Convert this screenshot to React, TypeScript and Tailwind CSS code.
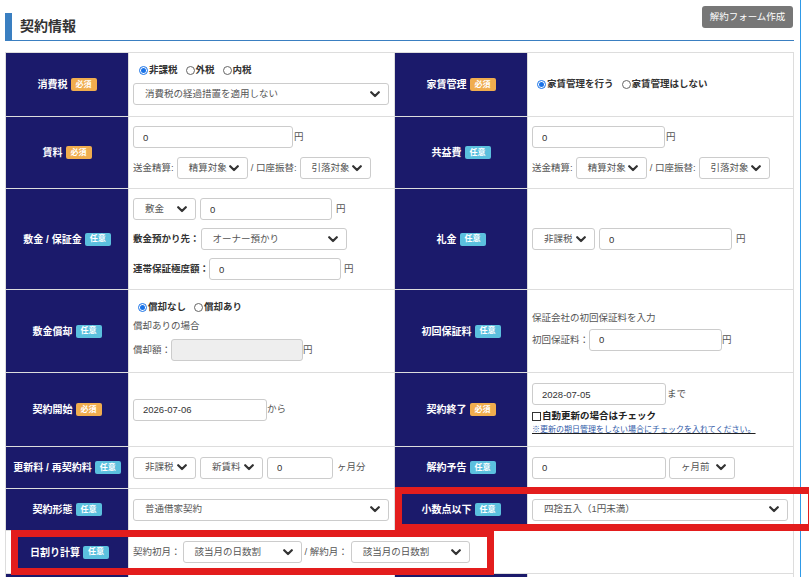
import React from "react";

const NAVY = "bg-[#1b1a6b]";

function Badge({ req }: { req?: boolean }) {
  return req ? (
    <span className="bg-[#f0ad4e] text-white text-[8px] font-bold h-[13px] px-[5px] flex items-center rounded-[2px]">必須</span>
  ) : (
    <span className="bg-[#5bc0de] text-white text-[8px] font-bold h-[13px] px-[5px] flex items-center rounded-[2px]">任意</span>
  );
}

function Label({ text, req }: { text: string; req?: boolean }) {
  return (
    <div className={`${NAVY} flex items-center justify-center gap-[3px] text-white text-[10px] font-bold`}>
      <span>{text}</span>
      <Badge req={req} />
    </div>
  );
}

function Chevron() {
  return (
    <svg width="10" height="7" viewBox="0 0 10 7" className="shrink-0">
      <polyline points="1.2,1.2 5,5 8.8,1.2" fill="none" stroke="#333" strokeWidth="2.2" strokeLinecap="round" strokeLinejoin="round" />
    </svg>
  );
}

function Sel({ text, w }: { text: string; w: string }) {
  return (
    <div className={`${w} h-[22px] shrink-0 border border-[#ccc] rounded-[3px] bg-white flex items-center justify-between pl-[11px] pr-[8px] text-[9.5px] text-[#555]`}>
      <span className="whitespace-nowrap">{text}</span>
      <Chevron />
    </div>
  );
}

function Inp({ v, w, disabled }: { v?: string; w: string; disabled?: boolean }) {
  return (
    <input
      readOnly
      value={v ?? ""}
      className={`${w} h-[22px] shrink-0 border border-[#ccc] rounded-[3px] pl-[9px] text-[9.5px] text-[#333] outline-none ${disabled ? "bg-[#eee]" : "bg-white"}`}
    />
  );
}

function Radio({ checked, label }: { checked?: boolean; label: string }) {
  return (
    <span className="flex items-center gap-[1px] font-bold text-[#333] text-[9.5px] whitespace-nowrap">
      {checked ? (
        <span className="w-[9px] h-[9px] rounded-full border border-[#1a73e8] bg-white flex items-center justify-center">
          <span className="w-[5px] h-[5px] rounded-full bg-[#1a73e8]" />
        </span>
      ) : (
        <span className="w-[9px] h-[9px] rounded-full border border-[#666] bg-white" />
      )}
      {label}
    </span>
  );
}

export default function App() {
  return (
    <div className="relative w-[809px] h-[577px] overflow-hidden bg-white flex font-['Liberation_Sans','Noto_Sans_CJK_JP',sans-serif] text-[9.5px] text-[#555]">
      <div className="w-[800px] pl-[5px] pr-[6px] shrink-0">
        {/* header */}
        <div className="h-[41px] border-b border-[#3a7fc1] flex justify-between">
          <div className="mt-[13px] h-[27px] border-l-[7px] border-[#3a7fc1] pl-[8px] flex items-center text-[14px] font-bold text-[#333]">
            契約情報
          </div>
          <div className="mt-[6px] mr-[1px] h-[22px] w-[91px] bg-[#777] rounded-[3px] text-white text-[9.5px] flex items-center justify-center">
            解約フォーム作成
          </div>
        </div>

        {/* table */}
        <div className="mt-[11px] w-[789px] h-[540px] grid grid-cols-[122px_265px_132px_265px] grid-rows-[63px_71px_100px_82px_73px_41px_41px_42px_1fr] gap-px p-px bg-[#ddd]">
          {/* row 1 */}
          <Label text="消費税" req />
          <div className="bg-white flex flex-col justify-center gap-[7px] pl-[4px]">
            <div className="flex items-center gap-[8px] pl-[6px] h-[12px]">
              <Radio checked label="非課税" />
              <Radio label="外税" />
              <Radio label="内税" />
            </div>
            <Sel text="消費税の経過措置を適用しない" w="w-[256px]" />
          </div>
          <Label text="家賃管理" req />
          <div className="bg-white flex items-center pl-[9px] gap-[8px]">
            <Radio checked label="家賃管理を行う" />
            <Radio label="家賃管理はしない" />
          </div>

          {/* row 2 */}
          <Label text="賃料" req />
          <div className="bg-white flex flex-col justify-center gap-[9px] pl-[4px]">
            <div className="flex items-center">
              <Inp v="0" w="w-[160px]" />
              <span className="ml-[1px]">円</span>
            </div>
            <div className="flex items-center gap-[3px] whitespace-nowrap">
              <span>送金精算:</span>
              <Sel text="精算対象" w="w-[71px]" />
              <span>/ 口座振替:</span>
              <Sel text="引落対象" w="w-[71px]" />
            </div>
          </div>
          <Label text="共益費" />
          <div className="bg-white flex flex-col justify-center gap-[9px] pl-[4px]">
            <div className="flex items-center">
              <Inp v="0" w="w-[133px]" />
              <span className="ml-[1px]">円</span>
            </div>
            <div className="flex items-center gap-[3px] whitespace-nowrap">
              <span>送金精算:</span>
              <Sel text="精算対象" w="w-[71px]" />
              <span>/ 口座振替:</span>
              <Sel text="引落対象" w="w-[71px]" />
            </div>
          </div>

          {/* row 3 */}
          <Label text="敷金 / 保証金" />
          <div className="bg-white flex flex-col justify-center gap-[8px] pl-[4px]">
            <div className="flex items-center gap-[4px]">
              <Sel text="敷金" w="w-[63px]" />
              <Inp v="0" w="w-[132px]" />
              <span>円</span>
            </div>
            <div className="flex items-center gap-[1px]">
              <span className="font-bold text-[#333] whitespace-nowrap">敷金預かり先：</span>
              <Sel text="オーナー預かり" w="w-[146px]" />
            </div>
            <div className="flex items-center">
              <span className="font-bold text-[#333] whitespace-nowrap">連帯保証極度額：</span>
              <Inp v="0" w="w-[132px]" />
              <span className="ml-[3px]">円</span>
            </div>
          </div>
          <Label text="礼金" />
          <div className="bg-white flex items-center gap-[4px] pl-[4px]">
            <Sel text="非課税" w="w-[63px]" />
            <Inp v="0" w="w-[133px]" />
            <span>円</span>
          </div>

          {/* row 4 */}
          <Label text="敷金償却" />
          <div className="bg-white flex flex-col justify-center gap-[7px] pl-[4px]">
            <div className="flex items-center gap-[8px] pl-[5px] h-[12px]">
              <Radio checked label="償却なし" />
              <Radio label="償却あり" />
            </div>
            <div className="h-[12px] flex items-center">償却ありの場合</div>
            <div className="flex items-center">
              <span className="whitespace-nowrap">償却額：</span>
              <Inp disabled w="w-[132px]" />
              <span>円</span>
            </div>
          </div>
          <Label text="初回保証料" />
          <div className="bg-white flex flex-col justify-center gap-[3px] pl-[4px]">
            <div>保証会社の初回保証料を入力</div>
            <div className="flex items-center">
              <span className="whitespace-nowrap">初回保証料：</span>
              <Inp v="0" w="w-[133px]" />
              <span>円</span>
            </div>
          </div>

          {/* row 5 */}
          <Label text="契約開始" req />
          <div className="bg-white flex items-center pl-[4px]">
            <Inp v="2026-07-06" w="w-[134px]" />
            <span>から</span>
          </div>
          <Label text="契約終了" req />
          <div className="bg-white flex flex-col justify-center pl-[4px]">
            <div className="flex items-center">
              <Inp v="2028-07-05" w="w-[134px]" />
              <span className="ml-[1px]">まで</span>
            </div>
            <div className="flex items-center mt-[5px] h-[12px] font-bold text-[#222]">
              <span className="w-[9px] h-[9px] border border-[#333] bg-white mr-[1px]" />
              自動更新の場合はチェック
            </div>
            <div className="mt-[2px] text-[8px] text-[#2f5aa8] underline decoration-[#222] whitespace-nowrap">
              ※更新の期日管理をしない場合にチェックを入れてください。
            </div>
          </div>

          {/* row 6 */}
          <Label text="更新料 / 再契約料" />
          <div className="bg-white flex items-center gap-[4px] pl-[4px]">
            <Sel text="非課税" w="w-[63px]" />
            <Sel text="新賃料" w="w-[63px]" />
            <Inp v="0" w="w-[66px]" />
            <span>ヶ月分</span>
          </div>
          <Label text="解約予告" />
          <div className="bg-white flex items-center gap-[3px] pl-[4px]">
            <Inp v="0" w="w-[134px]" />
            <Sel text="ヶ月前" w="w-[66px]" />
          </div>

          {/* row 7 */}
          <Label text="契約形態" />
          <div className="bg-white flex items-center pl-[4px]">
            <Sel text="普通借家契約" w="w-[256px]" />
          </div>
          <Label text="小数点以下" />
          <div className="bg-white flex items-center pl-[4px]">
            <Sel text="四捨五入（1円未満）" w="w-[256px]" />
          </div>

          {/* row 8 */}
          <div className={`${NAVY} border-l-[5px] border-white flex items-center justify-center gap-[3px] text-white text-[10px] font-bold`}>
            <span>日割り計算</span>
            <Badge />
          </div>
          <div className="col-span-3 bg-white flex items-center pl-[4px]">
            <span className="whitespace-nowrap mr-[2px]">契約初月：</span>
            <Sel text="該当月の日数割" w="w-[119px]" />
            <span className="whitespace-nowrap mx-[3px]">/ 解約月：</span>
            <Sel text="該当月の日数割" w="w-[119px]" />
          </div>

          {/* row 9 */}
          <div className={NAVY} />
          <div className="bg-white" />
          <div className={NAVY} />
          <div className="bg-white" />
        </div>
      </div>
      <div className="w-px h-full bg-[#2f9ae8] shrink-0" />

      {/* red annotation boxes */}
      <div className="absolute left-[395px] top-[487px] w-[420px] h-[44px] border-[7px] border-[#e31d1d]" />
      <div className="absolute left-[11px] top-[530px] w-[483px] h-[45px] border-[7px] border-[#e31d1d]" />
    </div>
  );
}
